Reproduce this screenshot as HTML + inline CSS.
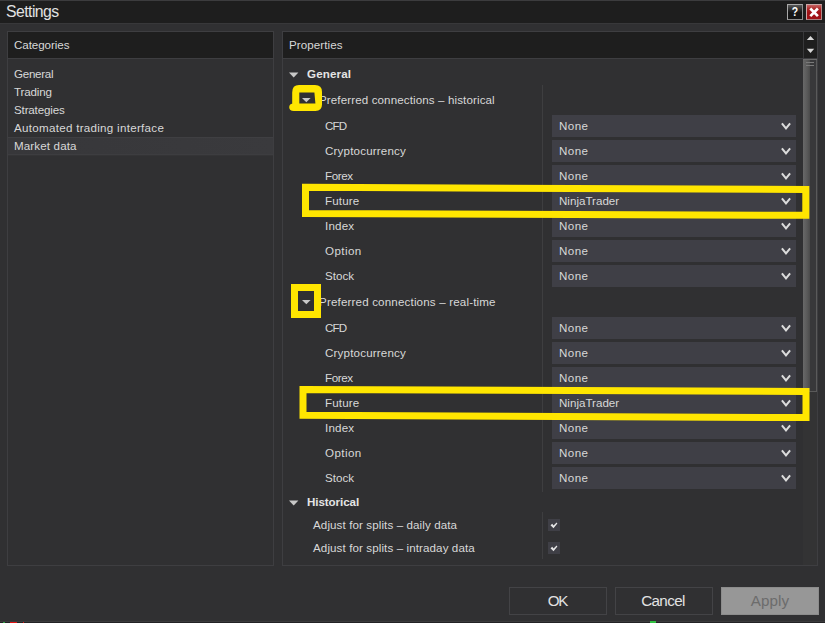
<!DOCTYPE html>
<html><head><meta charset="utf-8"><title>Settings</title>
<style>
*{box-sizing:border-box;margin:0;padding:0}
html,body{width:825px;height:623px;overflow:hidden;background:#303032}
body{position:relative;font-family:"Liberation Sans",sans-serif;color:#d8d8d8;font-size:11.6px}
.abs{position:absolute}
#titlebar{left:0;top:0;width:825px;height:24px;background:#1e1e1e;border-top:1px solid #3c3c3e;border-bottom:1px solid #38383a}
#title{left:6px;top:2px;font-size:15.8px;line-height:19px;color:#e2e2e2;white-space:nowrap;letter-spacing:-0.55px}
.panel{border:1px solid #3e3e41;background:#303032}
.hdr{background:#1e1e1e;border-bottom:1px solid #3e3e41;height:27px;line-height:25px;padding-left:6px;white-space:nowrap}
.t{position:absolute;white-space:nowrap;line-height:16px;height:16px}
.b{font-weight:bold;color:#e4e4e4}
.cb{position:absolute;left:552px;width:244px;height:22px;background:#3f3f46;line-height:22px;padding-left:7px;white-space:nowrap;letter-spacing:0.45px}
.cb svg{position:absolute;left:229px;top:7px}
.btn{position:absolute;top:587px;height:28px;width:98px;border:1px solid #434346;background:#303032;text-align:center;font-size:15.2px;line-height:25px;color:#e2e2e2}
</style></head><body>
<div id="titlebar" class="abs"></div>
<div id="title" class="abs">Settings</div>

<!-- help / close -->
<div class="abs" style="left:787px;top:4px;width:16px;height:16px;background:linear-gradient(#585858 0,#2a2a2a 35%,#151515 55%,#151515 100%);border:1px solid #a8a8a8;border-right-color:#8c8c8c;border-bottom-color:#8c8c8c;color:#fff;font-weight:bold;font-size:13px;line-height:14px;text-align:center"><span style="display:inline-block;transform:scaleX(0.8)">?</span></div>
<div class="abs" style="left:806px;top:4px;width:16px;height:16px;background:linear-gradient(#c66464 0,#ac2424 30%,#a01216 55%,#a01216 100%);border:1px solid #c8a8a8;border-right-color:#b08888;border-bottom-color:#a88080">
<svg width="14" height="14" viewBox="0 0 14 14" style="position:absolute;left:0;top:0"><path d="M3.3 3.5 L10.9 11.1 M10.9 3.5 L3.3 11.1" stroke="#fff" stroke-width="2.7" stroke-linecap="butt"/></svg></div>

<!-- Categories panel -->
<div class="abs panel" style="left:7px;top:31px;width:267px;height:535px">
  <div class="hdr" style="letter-spacing:-0.07px">Categories</div>
</div>
<div class="abs" style="left:8px;top:137px;width:265px;height:18px;background:linear-gradient(to right,#37373a,#3a3a3d);border-top:1px solid #3f3f42;border-bottom:1px solid #3d3d40"></div>
<div class="abs" style="left:8px;top:155px;width:265px;height:1px;background:#343436"></div>
<div class="t" style="left:14px;top:66px;letter-spacing:-0.27px">General</div>
<div class="t" style="left:14px;top:84px;letter-spacing:-0.14px">Trading</div>
<div class="t" style="left:14px;top:102px;letter-spacing:-0.16px">Strategies</div>
<div class="t" style="left:14px;top:120px;letter-spacing:0.285px">Automated trading interface</div>
<div class="t" style="left:14px;top:138px;letter-spacing:0.13px">Market data</div>

<!-- Properties panel -->
<div class="abs panel" style="left:282px;top:31px;width:536px;height:535px">
  <div class="hdr" style="letter-spacing:0.08px">Properties</div>
</div>
<div class="abs" style="left:803px;top:32px;width:1px;height:26px;background:#38383a"></div>
<svg class="abs" style="left:805px;top:35px" width="12" height="20" viewBox="0 0 12 20"><path d="M1.8 5 L5.5 0.9 L9.2 5 Z M1.8 13.7 L9.2 13.7 L5.5 17.9 Z" fill="#d8d8d8"/></svg>

<!-- scrollbar -->
<div class="abs" style="left:803px;top:59px;width:14px;height:506px;background:#333334"></div>
<div class="abs" style="left:803px;top:59px;width:14px;height:333px;background:linear-gradient(to right,#686868 0,#5a5a5a 4px,#4a4a4a 7px,#38383a 7.5px,#38383a 13px,#5a5a5a 13px);border-bottom:1px solid #5a5a5a"></div>
<div class="abs" style="left:803px;top:59px;width:14px;height:1px;background:#6c6c6c"></div>
<div class="abs" style="left:806px;top:62px;width:8px;height:1px;background:#7a7a7a"></div>
<div class="abs" style="left:806px;top:65px;width:8px;height:1px;background:#7a7a7a"></div>

<!-- divider -->
<div class="abs" style="left:542px;top:85px;width:1px;height:407px;background:#3e3e40"></div>
<div class="abs" style="left:542px;top:512px;width:1px;height:47px;background:#3e3e40"></div>

<!-- tree -->
<svg class="abs" style="left:289px;top:72px" width="10" height="6" viewBox="0 0 10 6"><path d="M0 0.5 H9.4 L4.7 5.5 Z" fill="#c8c8c8"/></svg>
<div class="t b" style="left:307px;top:66px;letter-spacing:0.14px">General</div>
<svg class="abs" style="left:302px;top:98px" width="9" height="5" viewBox="0 0 9 5"><path d="M0 0 H8.6 L4.3 4.3 Z" fill="#c8c8c8"/></svg>
<div class="t" style="left:319px;top:92px;letter-spacing:0.11px">Preferred connections – historical</div>

<div class="t" style="left:325px;top:118px;letter-spacing:-0.87px">CFD</div><div class="cb" style="top:115px">None<svg width="10" height="9" viewBox="0 0 10 9"><path d="M0.9 1.3 L5 6.4 L9.1 1.3" fill="none" stroke="#dcdcdc" stroke-width="2"/></svg></div>
<div class="t" style="left:325px;top:143px;letter-spacing:0.17px">Cryptocurrency</div><div class="cb" style="top:140px">None<svg width="10" height="9" viewBox="0 0 10 9"><path d="M0.9 1.3 L5 6.4 L9.1 1.3" fill="none" stroke="#dcdcdc" stroke-width="2"/></svg></div>
<div class="t" style="left:325px;top:168px;letter-spacing:-0.4px">Forex</div><div class="cb" style="top:165px">None<svg width="10" height="9" viewBox="0 0 10 9"><path d="M0.9 1.3 L5 6.4 L9.1 1.3" fill="none" stroke="#dcdcdc" stroke-width="2"/></svg></div>
<div class="t" style="left:325px;top:193px;letter-spacing:0.15px">Future</div><div class="cb" style="top:190px"><span style="letter-spacing:0">NinjaTrader</span><svg width="10" height="9" viewBox="0 0 10 9"><path d="M0.9 1.3 L5 6.4 L9.1 1.3" fill="none" stroke="#dcdcdc" stroke-width="2"/></svg></div>
<div class="t" style="left:325px;top:218px;letter-spacing:0.2px">Index</div><div class="cb" style="top:215px">None<svg width="10" height="9" viewBox="0 0 10 9"><path d="M0.9 1.3 L5 6.4 L9.1 1.3" fill="none" stroke="#dcdcdc" stroke-width="2"/></svg></div>
<div class="t" style="left:325px;top:243px;letter-spacing:0.43px">Option</div><div class="cb" style="top:240px">None<svg width="10" height="9" viewBox="0 0 10 9"><path d="M0.9 1.3 L5 6.4 L9.1 1.3" fill="none" stroke="#dcdcdc" stroke-width="2"/></svg></div>
<div class="t" style="left:325px;top:268px">Stock</div><div class="cb" style="top:265px">None<svg width="10" height="9" viewBox="0 0 10 9"><path d="M0.9 1.3 L5 6.4 L9.1 1.3" fill="none" stroke="#dcdcdc" stroke-width="2"/></svg></div>

<svg class="abs" style="left:302px;top:300px" width="9" height="5" viewBox="0 0 9 5"><path d="M0 0 H8.6 L4.3 4.3 Z" fill="#c8c8c8"/></svg>
<div class="t" style="left:319px;top:294px;letter-spacing:0.16px">Preferred connections – real-time</div>

<div class="t" style="left:325px;top:320px;letter-spacing:-0.87px">CFD</div><div class="cb" style="top:317px">None<svg width="10" height="9" viewBox="0 0 10 9"><path d="M0.9 1.3 L5 6.4 L9.1 1.3" fill="none" stroke="#dcdcdc" stroke-width="2"/></svg></div>
<div class="t" style="left:325px;top:345px;letter-spacing:0.17px">Cryptocurrency</div><div class="cb" style="top:342px">None<svg width="10" height="9" viewBox="0 0 10 9"><path d="M0.9 1.3 L5 6.4 L9.1 1.3" fill="none" stroke="#dcdcdc" stroke-width="2"/></svg></div>
<div class="t" style="left:325px;top:370px;letter-spacing:-0.4px">Forex</div><div class="cb" style="top:367px">None<svg width="10" height="9" viewBox="0 0 10 9"><path d="M0.9 1.3 L5 6.4 L9.1 1.3" fill="none" stroke="#dcdcdc" stroke-width="2"/></svg></div>
<div class="t" style="left:325px;top:395px;letter-spacing:0.15px">Future</div><div class="cb" style="top:392px"><span style="letter-spacing:0">NinjaTrader</span><svg width="10" height="9" viewBox="0 0 10 9"><path d="M0.9 1.3 L5 6.4 L9.1 1.3" fill="none" stroke="#dcdcdc" stroke-width="2"/></svg></div>
<div class="t" style="left:325px;top:420px;letter-spacing:0.2px">Index</div><div class="cb" style="top:417px">None<svg width="10" height="9" viewBox="0 0 10 9"><path d="M0.9 1.3 L5 6.4 L9.1 1.3" fill="none" stroke="#dcdcdc" stroke-width="2"/></svg></div>
<div class="t" style="left:325px;top:445px;letter-spacing:0.43px">Option</div><div class="cb" style="top:442px">None<svg width="10" height="9" viewBox="0 0 10 9"><path d="M0.9 1.3 L5 6.4 L9.1 1.3" fill="none" stroke="#dcdcdc" stroke-width="2"/></svg></div>
<div class="t" style="left:325px;top:470px">Stock</div><div class="cb" style="top:467px">None<svg width="10" height="9" viewBox="0 0 10 9"><path d="M0.9 1.3 L5 6.4 L9.1 1.3" fill="none" stroke="#dcdcdc" stroke-width="2"/></svg></div>

<svg class="abs" style="left:289px;top:500px" width="10" height="6" viewBox="0 0 10 6"><path d="M0 0.5 H9.4 L4.7 5.5 Z" fill="#c8c8c8"/></svg>
<div class="t b" style="left:307px;top:494px;letter-spacing:-0.08px">Historical</div>
<div class="t" style="left:313px;top:517px;letter-spacing:0.1px">Adjust for splits – daily data</div>
<div class="t" style="left:313px;top:540px;letter-spacing:0.1px">Adjust for splits – intraday data</div>
<div class="abs" style="left:548px;top:519px;width:12px;height:12px;background:#3f3f46"><svg width="12" height="12" viewBox="0 0 12 12" style="position:absolute;left:0;top:0"><path d="M2.5 6.3 L4.3 4.8 L5.5 6.6 L8.6 3.6 L9.4 4.4 L5.5 9.3 Z" fill="#e6e6e6"/></svg></div>
<div class="abs" style="left:548px;top:542px;width:12px;height:12px;background:#3f3f46"><svg width="12" height="12" viewBox="0 0 12 12" style="position:absolute;left:0;top:0"><path d="M2.5 6.3 L4.3 4.8 L5.5 6.6 L8.6 3.6 L9.4 4.4 L5.5 9.3 Z" fill="#e6e6e6"/></svg></div>

<!-- yellow annotations -->
<svg class="abs" style="left:0;top:0" width="825" height="623" viewBox="0 0 825 623">
  <path fill-rule="evenodd" d="M299 85.1 L315 85.1 Q322 85.1 322 92 L322 104.5 Q322 111 315.5 111 L293.8 111 Q289.2 110.8 289.2 107.2 Q289.4 103.9 292.2 103.7 L292.2 92.5 Q292.2 85.1 299 85.1 Z M299.3 92.4 L314.4 92.4 L315.4 103.4 L299.3 103.4 Z" fill="#ffe600"/>
  <polygon points="305.5,187.3 805.8,189.5 805.8,215.3 305.5,213.6" fill="none" stroke="#ffe600" stroke-width="7"/>
  <rect x="294.5" y="287.5" width="23" height="27" fill="none" stroke="#ffe600" stroke-width="7"/>
  <polygon points="303,389.5 806,391.5 806,417.6 303,415.2" fill="none" stroke="#ffe600" stroke-width="7"/>
</svg>

<!-- buttons -->
<div class="btn" style="left:509px;letter-spacing:-1.3px;padding-right:1px">OK</div>
<div class="btn" style="left:615px;letter-spacing:-0.6px;padding-right:2px">Cancel</div>
<div class="btn" style="left:721px;background:#979797;color:#6c6c6c;border-color:#8c8c8c;letter-spacing:0.15px">Apply</div>

<div class="abs" style="left:0;top:621px;width:825px;height:1px;background:#3a3a3c"></div>
<div class="abs" style="left:0;top:622px;width:825px;height:1px;background:#232325"></div>
<div class="abs" style="left:3px;top:622px;width:2px;height:1px;background:#2ea043"></div>
<div class="abs" style="left:10px;top:622px;width:7px;height:1px;background:#e01010"></div>
<div class="abs" style="left:23px;top:622px;width:1px;height:1px;background:#e01010"></div>
<div class="abs" style="left:650px;top:621px;width:6px;height:2px;background:#30c040"></div>
</body></html>
